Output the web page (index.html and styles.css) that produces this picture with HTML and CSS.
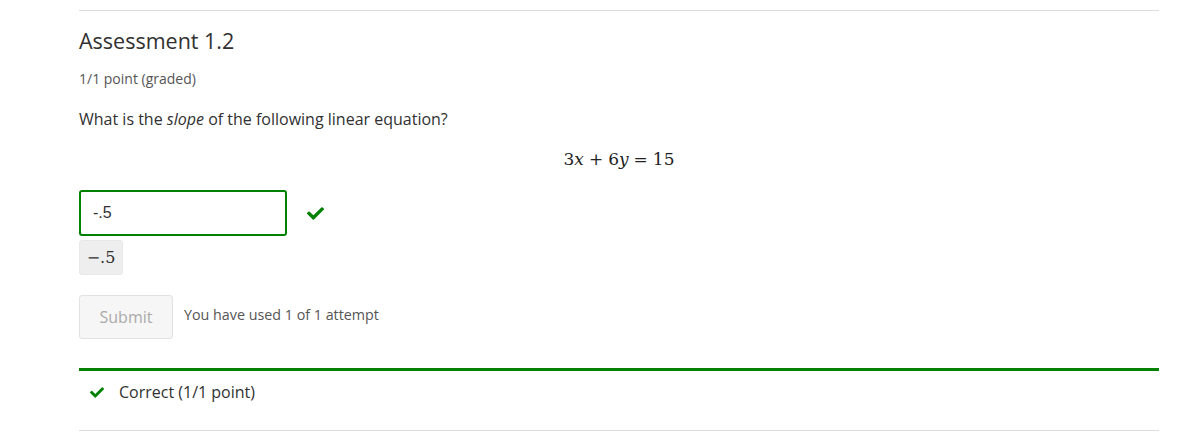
FILE: index.html
```html
<!DOCTYPE html>
<html>
<head>
<meta charset="utf-8">
<link rel="stylesheet" href="styles.css">
</head>
<body>
<div class="problem">
  <h3 class="title">Assessment 1.2</h3>
  <div class="points">1/1 point (graded)</div>
  <p class="question">What is the <em>slope</em> of the following linear equation?</p>
  <div class="equation"><span class="m">3<i>x</i></span><span class="op">+</span><span class="m">6<i>y</i></span><span class="op">=</span><span class="m">15</span></div>
  <div class="answer-row">
    <div class="input">-.5</div>
    <svg class="check big" viewBox="0 62 512 390" width="17" height="13"><path fill="#008100" d="M173.898 439.404l-166.4-166.4c-9.997-9.997-9.997-26.206 0-36.204l36.203-36.204c9.997-9.998 26.207-9.998 36.204 0L192 312.69 432.095 72.596c9.997-9.997 26.207-9.997 36.204 0l36.203 36.204c9.997 9.997 9.997 26.206 0 36.204l-294.4 294.401c-9.998 9.997-26.207 9.997-36.204-.001z"/></svg>
  </div>
  <div class="preview">−.5</div>
  <div class="actions">
    <button class="submit">Submit</button>
    <span class="attempts">You have used 1 of 1 attempt</span>
  </div>
  <div class="notification">
    <svg class="check" viewBox="0 62 512 390" width="14" height="11"><path fill="#008100" d="M173.898 439.404l-166.4-166.4c-9.997-9.997-9.997-26.206 0-36.204l36.203-36.204c9.997-9.998 26.207-9.998 36.204 0L192 312.69 432.095 72.596c9.997-9.997 26.207-9.997 36.204 0l36.203 36.204c9.997 9.997 9.997 26.206 0 36.204l-294.4 294.401c-9.998 9.997-26.207 9.997-36.204-.001z"/></svg>
    <span>Correct (1/1 point)</span>
  </div>
</div>
</body>
</html>
```
FILE: styles.css
```css
html, body {
  margin: 0;
  padding: 0;
  background: #fff;
}
body {
  font-family: "Open Sans", "Liberation Sans", sans-serif;
  color: #313131;
}
.problem {
  margin: 10px 33px 0 79px;
  border-top: 1px solid #ddd;
  border-bottom: 1px solid #ddd;
}
.title {
  margin: 15px 0 0 0;
  font-weight: 400;
  font-size: 21.5px;
  line-height: 30px;
  color: #313131;
}
.points {
  margin-top: 13px;
  font-size: 14px;
  line-height: 20px;
  color: #555;
}
.question {
  margin: 18px 0 0 0;
  font-size: 16px;
  line-height: 24px;
}
.equation {
  margin-top: 16px;
  display: flex;
  justify-content: center;
  font-family: "DejaVu Serif", "Liberation Serif", serif;
  font-size: 17px;
  line-height: 24px;
  color: #222;
}
.equation i {
  font-style: italic;
}
.equation .op {
  margin: 0 5px;
}
.answer-row {
  margin-top: 19px;
  display: flex;
  align-items: center;
  gap: 20px;
}
.input {
  box-sizing: border-box;
  width: 208px;
  height: 46px;
  border: 2px solid #008100;
  border-radius: 3px;
  padding: 0 12px;
  display: flex;
  align-items: center;
  font-family: "Liberation Sans", "Open Sans", sans-serif;
  font-size: 16px;
  color: #313131;
}
.preview {
  margin-top: 4px;
  display: inline-flex;
  align-items: center;
  justify-content: center;
  width: 44px;
  height: 35px;
  background: #eee;
  border-radius: 3px;
  font-family: "DejaVu Serif", "Liberation Serif", serif;
  font-size: 16px;
  color: #313131;
  box-sizing: border-box;
  border: 1px solid #e8e8e8;
}
.actions {
  margin-top: 20px;
  display: flex;
  align-items: center;
  gap: 11px;
}
.submit {
  box-sizing: border-box;
  width: 94px;
  height: 44px;
  background: #f6f6f6;
  border: 1px solid #e2e2e2;
  border-radius: 3px;
  font-family: "Open Sans", "Liberation Sans", sans-serif;
  font-size: 16px;
  color: #aaa;
  padding: 0;
}
.attempts {
  font-size: 14.3px;
  color: #555;
  padding-bottom: 6px;
}
.notification {
  margin-top: 29px;
  border-top: 3px solid #008100;
  height: 62px;
  box-sizing: border-box;
  display: flex;
  align-items: flex-start;
  padding: 9px 0 0 11px;
  gap: 15px;
  font-size: 16px;
  line-height: 24px;
  color: #313131;
}
.notification .check {
  margin-top: 7px;
}
```
